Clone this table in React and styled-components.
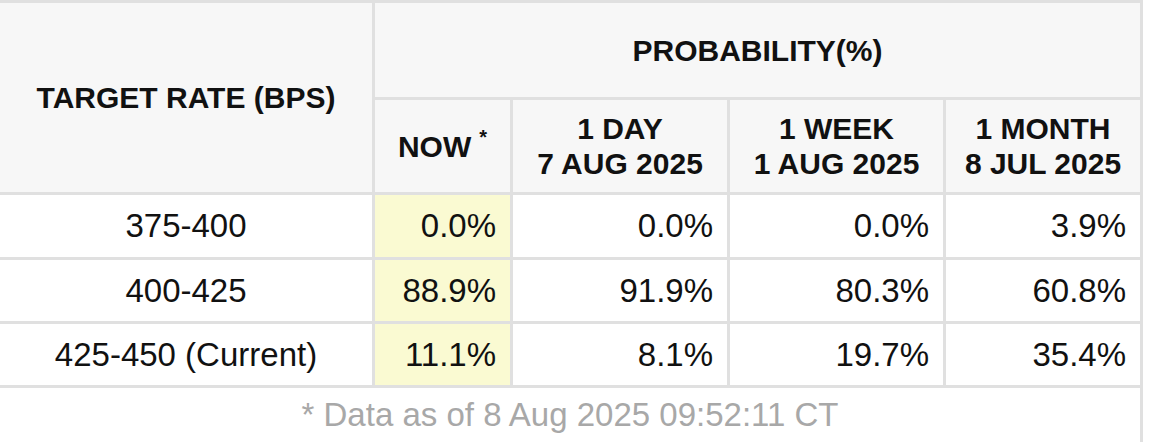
import { createGlobalStyle, styled } from "styled-components";

const GlobalStyle = createGlobalStyle`
  html, body {
    margin: 0;
    padding: 0;
    background: #ffffff;
  }
  body {
    font-family: "Liberation Sans", Arial, sans-serif;
    color: #111;
  }
`;

const columns = [
    { title: "1 DAY", date: "7 AUG 2025" },
    { title: "1 WEEK", date: "1 AUG 2025" },
    { title: "1 MONTH", date: "8 JUL 2025" },
];

const rows = [
    { range: "375-400", now: "0.0%", values: ["0.0%", "0.0%", "3.9%"] },
    { range: "400-425", now: "88.9%", values: ["91.9%", "80.3%", "60.8%"] },
    { range: "425-450 (Current)", now: "11.1%", values: ["8.1%", "19.7%", "35.4%"] },
];

export default function App() {
    return (
        <>
            <GlobalStyle />
            <Panel>
                <Grid>
                    <HeadCell $rowSpan={2}>TARGET RATE (BPS)</HeadCell>
                    <HeadCell $colSpan={4}>PROBABILITY(%)</HeadCell>
                    <HeadCell>
                        NOW<Star>*</Star>
                    </HeadCell>
                    {columns.map((c) => (
                        <HeadCell key={c.title}>
                            {c.title}
                            <br />
                            {c.date}
                        </HeadCell>
                    ))}
                    {rows.map((r) => (
                        <Row key={r.range} r={r} />
                    ))}
                </Grid>
                <Footnote>* Data as of 8 Aug 2025 09:52:11 CT</Footnote>
            </Panel>
        </>
    );
}

function Row({ r }) {
    return (
        <>
            <RangeCell>{r.range}</RangeCell>
            <ValueCell $now>{r.now}</ValueCell>
            {r.values.map((v, i) => (
                <ValueCell key={i}>{v}</ValueCell>
            ))}
        </>
    );
}

const Panel = styled.div`
  width: 1140px;
  border-right: 3px solid #e0e0e0;
  min-height: 442px;
  box-sizing: content-box;
`;

const Grid = styled.div`
  display: grid;
  grid-template-columns: 372px 135px 214px 213px 194px;
  grid-template-rows: 94px 92px 62px 61px 61px;
  gap: 3px;
  padding: 3px 0;
  background: #e0e0e0;
`;

const HeadCell = styled.div`
  background: #f7f7f7;
  display: flex;
  align-items: center;
  justify-content: center;
  text-align: center;
  font-weight: 700;
  font-size: 30px;
  line-height: 35px;
  grid-row: ${(p) => (p.$rowSpan ? `span ${p.$rowSpan}` : "auto")};
  grid-column: ${(p) => (p.$colSpan ? `span ${p.$colSpan}` : "auto")};
`;

const Star = styled.sup`
  font-size: 20px;
  margin-left: 8px;
  position: relative;
  top: -9px;
`;

const RangeCell = styled.div`
  background: #ffffff;
  display: flex;
  align-items: center;
  justify-content: center;
  font-size: 33px;
`;

const ValueCell = styled.div`
  background: ${(p) => (p.$now ? "#fafad2" : "#ffffff")};
  display: flex;
  align-items: center;
  justify-content: flex-end;
  padding-right: 14px;
  font-size: 33px;
`;

const Footnote = styled.div`
  height: 54px;
  display: flex;
  align-items: center;
  justify-content: center;
  color: #a8a8a8;
  font-size: 33px;
`;
